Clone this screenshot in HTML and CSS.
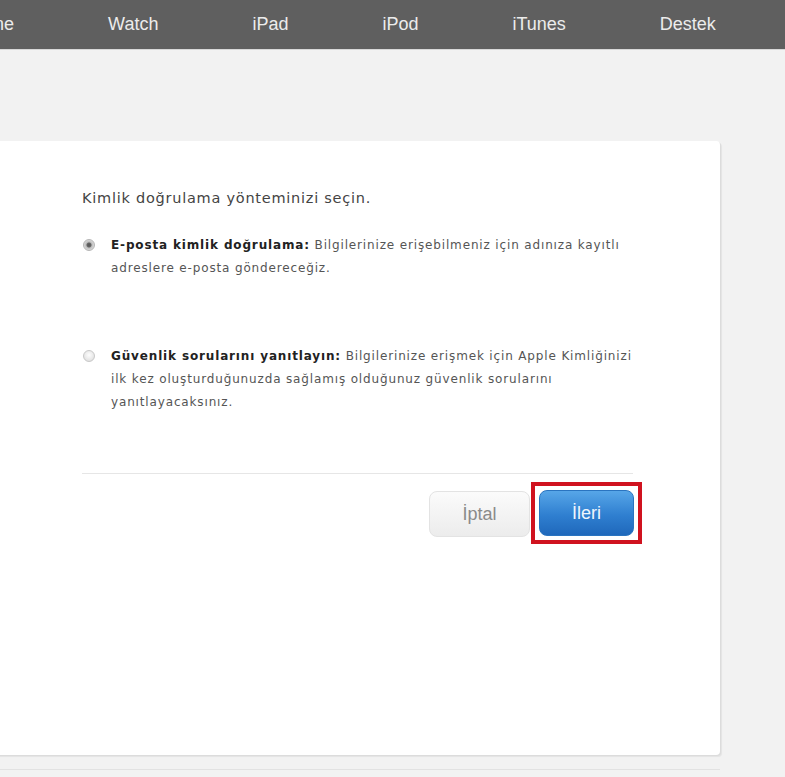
FILE: index.html
```html
<!DOCTYPE html>
<html>
<head>
  <meta charset="utf-8">
  <title>Apple Kimliği</title>
  <link rel="stylesheet" href="styles.css">
</head>
<body>
  <!-- Top navigation -->
  <nav class="globalnav">
    <ul class="nav-list">
      <li>iPhone</li>
      <li>Watch</li>
      <li>iPad</li>
      <li>iPod</li>
      <li>iTunes</li>
      <li>Destek</li>
    </ul>
  </nav>

  <div class="page">
    <div class="card">
      <h2 class="title">Kimlik doğrulama yönteminizi seçin.</h2>

      <div class="options">
        <label class="option">
          <span class="radio checked"></span>
          <span class="option-text"><b>E-posta kimlik doğrulama:</b> Bilgilerinize erişebilmeniz için adınıza kayıtlı adreslere e-posta göndereceğiz.</span>
        </label>

        <label class="option">
          <span class="radio"></span>
          <span class="option-text"><b>Güvenlik sorularını yanıtlayın:</b> Bilgilerinize erişmek için Apple Kimliğinizi ilk kez oluşturduğunuzda sağlamış olduğunuz güvenlik sorularını yanıtlayacaksınız.</span>
        </label>
      </div>

      <div class="divider"></div>

      <div class="actions">
        <button class="btn btn-cancel">İptal</button>
        <span class="highlight">
          <button class="btn btn-next">İleri</button>
        </span>
      </div>
    </div>
    <div class="footer-line"></div>
  </div>
</body>
</html>
```

FILE: styles.css
```css
/* Base */
body {
  margin: 0;
  background-color: #f2f2f2;
  font-family: "DejaVu Sans", Verdana, sans-serif;
  color: #444;
  overflow: hidden;
}

/* Global nav */
.globalnav {
  height: 49px;
  background-color: #5f5f5f;
  border-bottom: 1px solid #d8d8d8;
}

.nav-list {
  display: flex;
  align-items: center;
  gap: 94px;
  height: 49px;
  margin: 0 0 0 -42px;
  padding: 0;
  list-style: none;
  font-family: "Liberation Sans", Arial, sans-serif;
  font-size: 18px;
  color: #ececec;
  white-space: nowrap;
}

/* Page */
.page {
  padding-top: 91px;
}

.card {
  box-sizing: border-box;
  width: 760px;
  height: 614px;
  margin-left: -40px;
  padding: 48px 87px 0 122px;
  background-color: #fff;
  border-radius: 0 4px 4px 0;
  box-shadow: 1px 1px 0 #dcdcdc, 2px 2px 1px rgba(0, 0, 0, 0.06);
}

.title {
  margin: 0;
  font-size: 14.5px;
  font-weight: normal;
  line-height: 18px;
  letter-spacing: 0.75px;
  color: #444;
}

.options {
  display: flex;
  flex-direction: column;
  gap: 65px;
  margin-top: 27px;
}

.option {
  display: flex;
  align-items: flex-start;
  gap: 16px;
  padding-left: 1px;
}

.radio {
  flex: none;
  box-sizing: border-box;
  width: 12px;
  height: 12px;
  margin-top: 5px;
  border-radius: 50%;
  border: 1px solid #c8c8c8;
  background: radial-gradient(circle at 50% 40%, #fdfdfd 0%, #e4e4e4 70%, #d2d2d2 100%);
}

.radio.checked {
  border-color: #b5b5b5;
  background: radial-gradient(circle, #555 0, #666 2px, #bdbdbd 3px, #d9d9d9 5px, #cfcfcf 6px);
}

.option-text {
  font-size: 12px;
  line-height: 23px;
  letter-spacing: 0.85px;
  color: #555;
}

.option-text b {
  color: #222;
}

.divider {
  height: 1px;
  margin-top: 59px;
  background-color: #e6e6e6;
}

/* Buttons */
.actions {
  display: flex;
  justify-content: flex-end;
  align-items: center;
  margin-top: 8px;
  margin-right: -9px;
}

.btn {
  box-sizing: border-box;
  height: 46px;
  border-radius: 8px;
  font-family: "Liberation Sans", Arial, sans-serif;
  font-size: 18px;
  cursor: pointer;
}

.btn-cancel {
  width: 101px;
  margin-top: 2px;
  border: 1px solid #e3e3e3;
  background: linear-gradient(#fbfbfb, #ececec);
  color: #8a8a8a;
}

.highlight {
  display: flex;
  margin-left: 1px;
  padding: 4px;
  border: 4px solid #d0121f;
}

.btn-next {
  width: 95px;
  border: 1px solid #2a74c0;
  background: linear-gradient(#57a6e8, #2f7fd0 55%, #1f68bb);
  color: #eef5fc;
}

.footer-line {
  width: 720px;
  height: 1px;
  margin-top: 14px;
  background-color: #e2e2e2;
}
```
